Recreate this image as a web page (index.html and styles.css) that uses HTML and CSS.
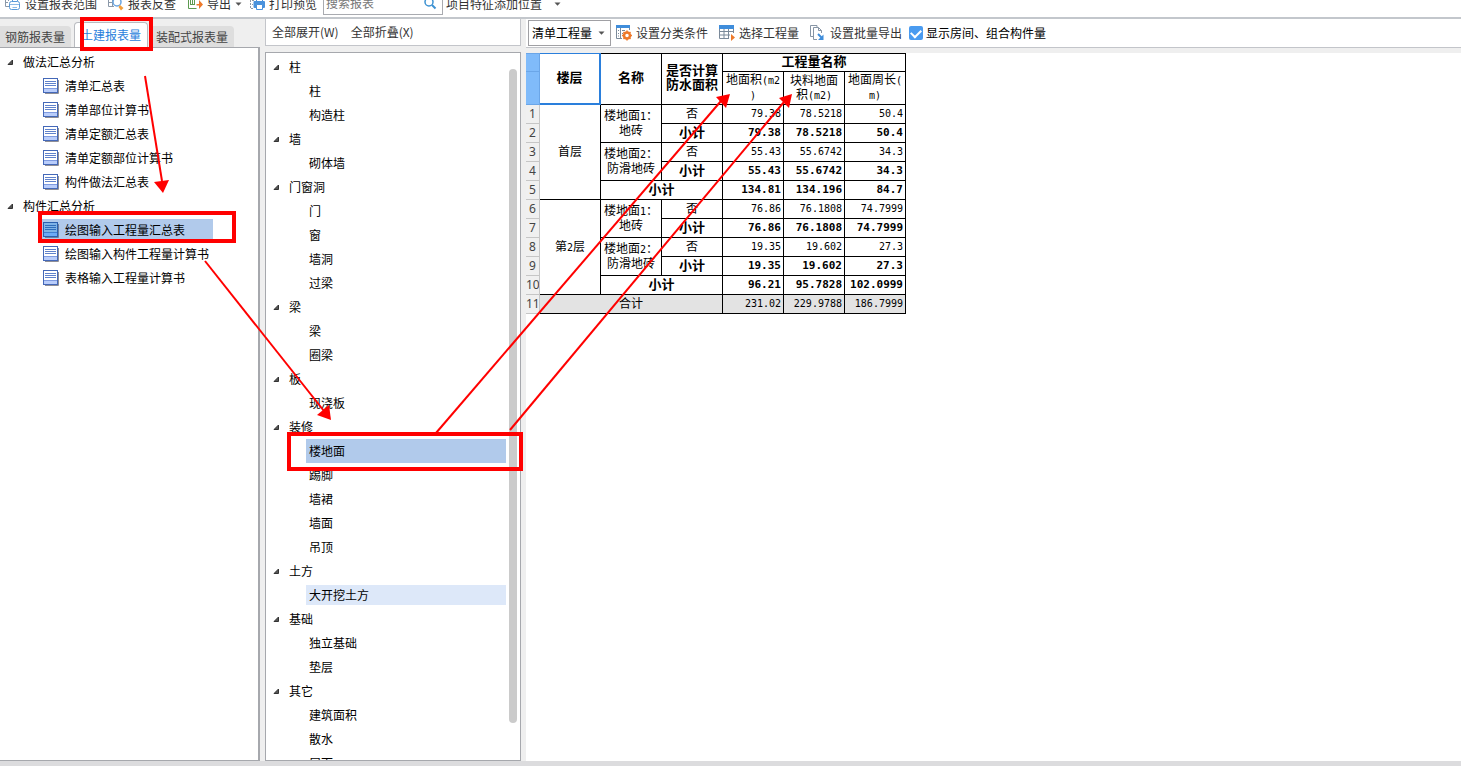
FILE: index.html
```html
<!DOCTYPE html>
<html lang="zh-CN">
<head>
<meta charset="utf-8">
<title>报表</title>
<link rel="stylesheet" href="styles.css">
</head>
<body>
<svg class="defs" width="0" height="0" aria-hidden="true">
  <symbol id="tri" viewBox="0 0 7 7"><path d="M5.500 1V5.500H1Z" fill="#555" stroke="#333" stroke-width="1"/></symbol>
  <symbol id="caret" viewBox="0 0 7 4"><path d="M0.5 0.5H6.5L3.5 3.8Z" fill="#555"/></symbol>
  <symbol id="doc" viewBox="0 0 16 16">
    <path d="M15.5 2V15.5H2" fill="none" stroke="#8f8f96"/>
    <rect x="0.5" y="0.5" width="14" height="14" fill="#fff" stroke="#4468b8"/>
    <rect x="1" y="11" width="13" height="3" fill="#b9cdfb"/>
    <path d="M2 3.5H13M2 5.5H13M2 7.5H13" stroke="#5f82cc"/><path d="M1 10.5H14" stroke="#7f9be0"/>
  </symbol>
  <symbol id="doc-on" viewBox="0 0 16 16">
    <path d="M15.5 2V15.5H2" fill="none" stroke="#6b7f9f"/>
    <rect x="0.5" y="0.5" width="14" height="14" fill="#7fb3e6" stroke="#2a5fae"/>
    <rect x="1" y="11" width="13" height="3" fill="#6caaf6"/>
    <path d="M2 3.5H13M2 5.5H13M2 7.5H13" stroke="#2f6dbb"/><path d="M1 10.5H14" stroke="#3f7fd0"/>
  </symbol>
</svg>

<header class="topbar">
  <button class="tool first" type="button">
    <svg width="16" height="16" viewBox="0 0 16 16" fill="none"><path d="M.5 1V10.500H4M.5 6.500H3M3.500 1V5" stroke="#8b98a8"/><path d="M7.500 1V5M12.500 1V5" stroke="#5a9ad8"/><rect x="4.500" y="5.500" width="10" height="8" rx="2" fill="#fff" stroke="#5a9ad8"/><path d="M5 8.500H14M7.500 11.500H12" stroke="#8fbbe6"/></svg>
    <span>设置报表范围</span></button>
  <button class="tool" type="button">
    <svg width="16" height="16" viewBox="0 0 16 16" fill="none"><path d="M.5 1V10.500H6M.5 6.500H5M4.500 1V10" stroke="#8b98a8"/><circle cx="9" cy="6" r="4" fill="#fff" stroke="#6aa5e0" stroke-width="1.500"/><path d="M12 9L15.500 12L13 14.500L10.500 11Z" fill="#f2a03c"/></svg>
    <span>报表反查</span></button>
  <button class="tool" type="button">
    <svg width="16" height="16" viewBox="0 0 16 16" fill="none"><path d="M1.500 0V12.500H9.500M.5 3.500H9" stroke="#5d9a50"/><rect x="3.500" y="3.500" width="4" height="5" stroke="#5d9a50"/><path d="M5.500 3V9" stroke="#5d9a50"/><path d="M9.500 8H12V4L16 8.500L12 13V9.500H9.500Z" fill="#ee7a2b"/></svg>
    <span>导出</span><svg width="7" height="4"><use href="#caret"/></svg></button>
  <button class="tool print" type="button">
    <svg width="16" height="16" viewBox="0 0 16 16" fill="none"><path d="M1.500 1V12.500H4" stroke="#8b98a8" stroke-dasharray="2 1"/><path d="M3 4.500H5M3 8.500H4" stroke="#8b98a8"/><rect x="4.500" y="5" width="11.500" height="7" rx="1" fill="#4a92dc"/><path d="M7.500 5V1.500H13.500V5M7.500 8.500H13.500V13.500H7.500Z" fill="#fff" stroke="#4a92dc"/></svg>
    <span>打印预览</span></button>
  <label class="search"><input type="text" placeholder="搜索报表" aria-label="搜索报表">
    <svg width="14" height="14" viewBox="0 0 14 14" fill="none"><circle cx="6" cy="6" r="4" stroke="#3d92d2" stroke-width="1.500"/><path d="M9 9L12.500 12.500" stroke="#3d92d2" stroke-width="2"/></svg></label>
  <button class="tool place" type="button"><span>项目特征添加位置</span><svg width="7" height="4"><use href="#caret"/></svg></button>
</header>

<main class="work">
  <section class="reports">
    <nav class="tabs">
      <button class="tab" type="button">钢筋报表量</button>
      <button class="tab current" type="button">土建报表量</button>
      <button class="tab" type="button">装配式报表量</button>
    </nav>
    <div class="panel">
      <ul class="tree files">
        <li class="group"><svg width="7" height="7"><use href="#tri"/></svg>做法汇总分析</li>
        <li class="leaf"><span><svg width="16" height="16"><use href="#doc"/></svg>清单汇总表</span></li>
        <li class="leaf"><span><svg width="16" height="16"><use href="#doc"/></svg>清单部位计算书</span></li>
        <li class="leaf"><span><svg width="16" height="16"><use href="#doc"/></svg>清单定额汇总表</span></li>
        <li class="leaf"><span><svg width="16" height="16"><use href="#doc"/></svg>清单定额部位计算书</span></li>
        <li class="leaf"><span><svg width="16" height="16"><use href="#doc"/></svg>构件做法汇总表</span></li>
        <li class="group"><svg width="7" height="7"><use href="#tri"/></svg>构件汇总分析</li>
        <li class="leaf"><span class="picked"><svg width="16" height="16"><use href="#doc-on"/></svg>绘图输入工程量汇总表</span></li>
        <li class="leaf"><span><svg width="16" height="16"><use href="#doc"/></svg>绘图输入构件工程量计算书</span></li>
        <li class="leaf"><span><svg width="16" height="16"><use href="#doc"/></svg>表格输入工程量计算书</span></li>
      </ul>
    </div>
  </section>

  <section class="parts">
    <div class="fold"><button type="button">全部展开(W)</button><button type="button">全部折叠(X)</button></div>
    <div class="panel">
      <ul class="tree kinds">
        <li class="group"><svg width="7" height="7"><use href="#tri"/></svg>柱</li>
        <li class="leaf">柱</li>
        <li class="leaf">构造柱</li>
        <li class="group"><svg width="7" height="7"><use href="#tri"/></svg>墙</li>
        <li class="leaf">砌体墙</li>
        <li class="group"><svg width="7" height="7"><use href="#tri"/></svg>门窗洞</li>
        <li class="leaf">门</li>
        <li class="leaf">窗</li>
        <li class="leaf">墙洞</li>
        <li class="leaf">过梁</li>
        <li class="group"><svg width="7" height="7"><use href="#tri"/></svg>梁</li>
        <li class="leaf">梁</li>
        <li class="leaf">圈梁</li>
        <li class="group"><svg width="7" height="7"><use href="#tri"/></svg>板</li>
        <li class="leaf">现浇板</li>
        <li class="group"><svg width="7" height="7"><use href="#tri"/></svg>装修</li>
        <li class="leaf picked">楼地面</li>
        <li class="leaf">踢脚</li>
        <li class="leaf">墙裙</li>
        <li class="leaf">墙面</li>
        <li class="leaf">吊顶</li>
        <li class="group"><svg width="7" height="7"><use href="#tri"/></svg>土方</li>
        <li class="leaf hovered">大开挖土方</li>
        <li class="group"><svg width="7" height="7"><use href="#tri"/></svg>基础</li>
        <li class="leaf">独立基础</li>
        <li class="leaf">垫层</li>
        <li class="group"><svg width="7" height="7"><use href="#tri"/></svg>其它</li>
        <li class="leaf">建筑面积</li>
        <li class="leaf">散水</li>
        <li class="leaf">屋面</li>
      </ul>
      <div class="scroll"></div>
    </div>
  </section>

  <section class="result">
    <div class="options">
      <div class="combo"><select aria-label="工程量类型"><option>清单工程量</option></select><svg width="7" height="4"><use href="#caret"/></svg></div>
      <button class="opt" type="button">
        <svg width="16" height="16" viewBox="0 0 16 16" fill="none"><path d="M.5 2V13.500H6M4.500 3V13M13.500 2V5M6 5.500H9M6 8.500H7M2 5.500H3M2 8.500H3M2 11H3" stroke="#7b8a9a"/><rect x="0" y="0" width="14" height="3" fill="#3f8ddb"/><circle cx="11" cy="10.500" r="3" stroke="#ee7a2b" stroke-width="2.500"/><path d="M11 5.500V8M11 13V15.500M6 10.500H8M14 10.500H16M7.500 7L9 8.500M13 12.500L14.500 14M14.500 7L13 8.500M9 12.500L7.500 14" stroke="#ee7a2b" stroke-width="1.500"/></svg>
        <span>设置分类条件</span></button>
      <button class="opt" type="button">
        <svg width="16" height="16" viewBox="0 0 16 16" fill="none"><path d="M.5 3V13.500H10M.5 6.500H14.500V3M.5 10H11M5 4V13M9.500 4V13M14.500 6V8" stroke="#7b8a9a"/><rect x="0" y="0" width="15" height="4" fill="#3f8ddb"/><path d="M12 9L16 12.500L12 16Z" fill="#ee7a2b"/></svg>
        <span>选择工程量</span></button>
      <button class="opt batch" type="button">
        <svg width="16" height="16" viewBox="0 0 16 16" fill="none"><path d="M3 11.500H.5V.5H7V2" stroke="#8795a5"/><path d="M7 14.500H3.500V2.500H8.500L11.500 5.500V8M8.500 2.500V5.500H11.500" fill="#fff" stroke="#8795a5"/><path d="M8 9L11.500 12.500" stroke="#3f8ddb" stroke-width="2"/><path d="M13.500 9.500V15H8Z" fill="#3f8ddb"/></svg>
        <span>设置批量导出</span></button>
      <label class="check"><input type="checkbox" checked><span>显示房间、组合构件量</span></label>
    </div>
    <div class="sheet">
      <table>
        <colgroup><col class="num"><col><col><col><col><col><col></colgroup>
        <thead>
          <tr class="r1"><th class="no"></th><th class="active tall" rowspan="2">楼层</th><th class="tall" rowspan="2">名称</th><th class="tall" rowspan="2">是否计算<br>防水面积</th><th colspan="3">工程量名称</th></tr>
          <tr class="r2"><th class="no"></th><td>地面积<i>(m2</i><br><i>)</i></td><td>块料地面<br>积<i>(m2)</i></td><td>地面周长<i>(</i><br><i>m)</i></td></tr>
        </thead>
        <tbody>
          <tr><th class="no">1</th><td rowspan="5">首层</td><td rowspan="2">楼地面<i>1</i>：<br>地砖</td><td>否</td><td class="v">79.38</td><td class="v">78.5218</td><td class="v">50.4</td></tr>
          <tr class="sub"><th class="no">2</th><td>小计</td><td class="v">79.38</td><td class="v">78.5218</td><td class="v">50.4</td></tr>
          <tr><th class="no">3</th><td rowspan="2">楼地面<i>2</i>：<br>防滑地砖</td><td>否</td><td class="v">55.43</td><td class="v">55.6742</td><td class="v">34.3</td></tr>
          <tr class="sub"><th class="no">4</th><td>小计</td><td class="v">55.43</td><td class="v">55.6742</td><td class="v">34.3</td></tr>
          <tr class="sub"><th class="no">5</th><td colspan="2">小计</td><td class="v">134.81</td><td class="v">134.196</td><td class="v">84.7</td></tr>
          <tr><th class="no">6</th><td rowspan="5">第<i>2</i>层</td><td rowspan="2">楼地面<i>1</i>：<br>地砖</td><td>否</td><td class="v">76.86</td><td class="v">76.1808</td><td class="v">74.7999</td></tr>
          <tr class="sub"><th class="no">7</th><td>小计</td><td class="v">76.86</td><td class="v">76.1808</td><td class="v">74.7999</td></tr>
          <tr><th class="no">8</th><td rowspan="2">楼地面<i>2</i>：<br>防滑地砖</td><td>否</td><td class="v">19.35</td><td class="v">19.602</td><td class="v">27.3</td></tr>
          <tr class="sub"><th class="no">9</th><td>小计</td><td class="v">19.35</td><td class="v">19.602</td><td class="v">27.3</td></tr>
          <tr class="sub"><th class="no">10</th><td colspan="2">小计</td><td class="v">96.21</td><td class="v">95.7828</td><td class="v">102.0999</td></tr>
          <tr class="total"><th class="no">11</th><td colspan="3">合计</td><td class="v">231.02</td><td class="v">229.9788</td><td class="v">186.7999</td></tr>
        </tbody>
      </table>
    </div>
  </section>
</main>

<svg class="marks" width="800" height="480" viewBox="0 0 800 480" fill="none" stroke="#f00" aria-hidden="true">
  <g stroke-width="4"><rect x="82" y="19" width="69" height="30"/><rect x="40" y="213" width="194" height="28"/><rect x="289" y="434" width="232" height="35"/></g>
  <g stroke-width="2"><path d="M145 76L162 181"/><path d="M205 261L324 411"/><path d="M436 433L721 101"/><path d="M510 430L784 102"/></g>
  <g fill="#f00" stroke="none"><path d="M154 182L169 180L163 193Z"/><path d="M317 415L329 405L331 420Z"/><path d="M716 97L730 94L726 108Z"/><path d="M779 98L792 94L789 108Z"/></g>
</svg>
</body>
</html>
```
FILE: styles.css
```css
* { box-sizing: border-box; }
body {
  margin: 0;
  height: 100vh;
  display: flex;
  flex-direction: column;
  overflow: hidden;
  position: relative;
  background: #efefef;
  border-bottom: 5px solid #dcdcde;
  color: #000;
  font: 12px/16px "Noto Sans CJK SC", sans-serif;
}
button, input, select { font: inherit; color: inherit; margin: 0; padding: 0; border: 0; background: none; white-space: nowrap; }
svg { flex: none; }
.defs { position: absolute; }

.topbar {
  flex: none;
  height: 19px;
  padding: 0 0 2px 5px;
  display: flex;
  align-items: flex-end;
  overflow: hidden;
  background: #fff;
  border-bottom: 2px solid #c3c7cc;
  color: #333;
}
.tool { height: 20px; margin: 0 11px 1px 0; display: flex; align-items: center; gap: 4px; }
.tool:nth-child(3) { margin-right: 7px; }
.tool.print { margin-right: 6px; }
.tool.place { margin-left: 3px; gap: 12px; }
.search { width: 120px; height: 24px; flex: none; display: flex; align-items: center; border: 1px solid #a9abb0; padding: 0 5px 0 2px; background: #fff; }
.search input { flex: 1; min-width: 0; outline: 0; }
.search input::placeholder { color: #777; opacity: 1; }

.work { flex: 1; min-height: 0; display: flex; }
.reports, .parts { flex: none; display: flex; flex-direction: column; min-height: 0; }
.reports { width: 260px; padding-top: 3px; }
.parts { width: 256px; margin: 0 5px; gap: 6px; }
.panel { flex: 1; min-height: 0; display: flex; overflow: hidden; background: #fff; border: 1px solid #a6a8ad; }
.reports .panel { border-left: 0; border-right-width: 2px; }

.tabs { height: 25px; flex: none; display: flex; align-items: flex-end; }
.tab { height: 21px; padding: 0 6px 0 5px; background: #dedede; border-radius: 0 4px 0 0; color: #444; }
.tab.current { height: 25px; margin: 0 3px; padding: 0 6px; background: #fff; border: 1px solid #b9bbc0; border-bottom: 0; border-radius: 4px 4px 0 0; color: #2a7fdc; }

.tree { list-style: none; margin: 0; padding: 2px 0 0; flex: 1; min-width: 0; }
.tree li { height: 24px; display: flex; align-items: center; white-space: nowrap; }
.files .group { padding-left: 7px; gap: 9px; }
.files .leaf { padding-left: 41px; }
.files .leaf span { height: 22px; display: flex; align-items: center; gap: 6px; padding-left: 2px; }
.files .leaf .picked { width: 172px; background: #b1caeb; }
.kinds .group { padding-left: 7px; gap: 9px; }
.kinds .leaf { margin: 0 3px 0 40px; padding-left: 3px; }
.picked { background: #b1caeb; }
.tree .hovered { height: 20px; margin-top: 2px; margin-bottom: 2px; background: #dde8f9; }
.scroll { width: 8px; flex: none; margin: 16px 3px 37px 0; border-radius: 4px; background: #cbcbcb; }

.fold { height: 27px; flex: none; display: flex; align-items: center; gap: 12px; padding: 0 6px; background: #fff; border: 1px solid #c3c5ca; border-top: 0; color: #333; }

.result { flex: 1; min-width: 0; display: flex; flex-direction: column; }
.options { height: 29px; flex: none; display: flex; align-items: center; margin-bottom: 5px; padding-left: 2px; background: #fff; border-bottom: 1px solid #c3c5ca; color: #333; }
.combo { width: 83px; height: 26px; display: flex; align-items: center; padding: 0 5px 0 3px; border: 1px solid #a0a0a4; color: #000; margin-right: 5px; }
.combo select { flex: 1; min-width: 0; appearance: none; outline: 0; }
.opt { display: flex; align-items: center; gap: 4px; margin-right: 11px; }
.opt.batch { margin-right: 7px; }
.check { display: flex; align-items: center; gap: 3px; color: #000; }
.check input { appearance: none; width: 14px; height: 14px; border-radius: 2px; background: #4a9bf0; display: grid; place-items: center; }
.check input::after { content: ""; width: 8px; height: 5px; margin-bottom: 2px; border: solid #fff; border-width: 0 0 2px 2px; transform: rotate(-45deg); }

.sheet { flex: 1; min-height: 0; background: #fff; }
table { width: 380px; table-layout: fixed; border-spacing: 0; line-height: 14px; text-align: center; }
.num { width: 14px; }
th, td { height: 19px; padding: 0 0 2px; border: solid #000; border-width: 0 1px 1px 0; white-space: nowrap; overflow: hidden; }
thead .r1 th { border-top: 1px solid #000; padding-bottom: 3px; }
.r1 th { height: 19px; font-size: 13px; }
thead .r1 .tall { padding-bottom: 4px; }
.r2 th, .r2 td { height: 33px; }
th.no, thead .r1 th.no { padding: 0; border-color: #c6c6c6; background: #f0f0f0; color: #444; font: 12px/16px "Noto Sans", sans-serif; }
thead th.no, thead .r1 th.no { background: #80bbfa; border-color: #6ba6e8; }
thead .r1 th.active { border: solid #2a7fdc; border-width: 1px 2px 2px 0; }
i { font: 10px/12px "DejaVu Sans Mono", monospace; }
.v { padding: 0 2px 1px 0; text-align: right; font: 10px/14px "DejaVu Sans Mono", monospace; }
.sub td { font-size: 13px; font-weight: bold; }
.sub td.v { font-size: 11px; }
.total td { background: #e3e3e3; }

.marks { position: absolute; left: 0; top: 0; pointer-events: none; }
```
